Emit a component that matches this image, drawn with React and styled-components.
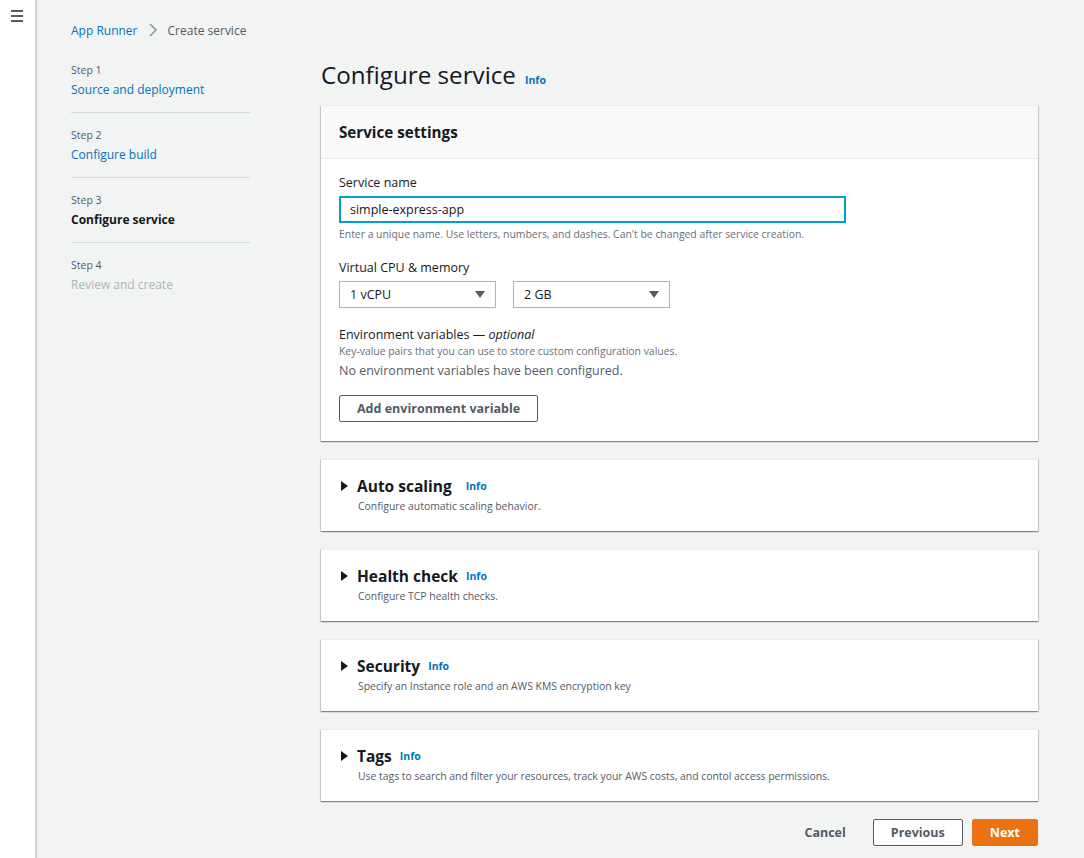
import React from 'react';
import styled, { createGlobalStyle } from 'styled-components';

const GlobalStyle = createGlobalStyle`
    html, body {
        margin: 0;
        padding: 0;
        background: #f2f3f3;
        font-family: "Open Sans", "Liberation Sans", sans-serif;
        color: #16191f;
    }
    * { box-sizing: border-box; }
`;

const Page = styled.div`
    display: flex;
    min-height: 858px;
`;

const SideRail = styled.div`
    width: 36px;
    flex-shrink: 0;
    background: #fff;
    border-right: 1px solid #d5dbdb;
    box-shadow: 1px 0 1px rgba(0, 28, 36, 0.15);
    padding-top: 10px;
    display: flex;
    justify-content: center;
`;

const Burger = styled.div`
    display: flex;
    flex-direction: column;
    gap: 3px;
    margin-left: -2px;
    span {
        display: block;
        width: 12px;
        height: 2px;
        background: #545b64;
    }
`;

const Main = styled.div`
    flex: 1;
    padding: 20px 46px 0 35px;
`;

const Crumbs = styled.nav`
    display: flex;
    align-items: center;
    gap: 8px;
    font-size: 12px;
    height: 20px;
`;

const CrumbLink = styled.a`
    color: #0073bb;
    text-decoration: none;
`;

const CrumbCurrent = styled.span`
    color: #545b64;
`;

const Columns = styled.div`
    display: flex;
    gap: 71px;
    margin-top: 22px;
`;

const Steps = styled.ol`
    list-style: none;
    margin: 0;
    padding: 0;
    width: 179px;
    flex-shrink: 0;
`;

const Step = styled.li`
    padding: 14px 0 12px;
    border-bottom: ${p => (p.$last ? 'none' : '1px solid #d5dbdb')};
    &:first-child { padding-top: 0; }
`;

const StepNum = styled.div`
    font-size: 10.5px;
    color: #545b64;
    line-height: 16px;
`;

const StepName = styled.div`
    font-size: 12px;
    line-height: 20px;
    margin-top: 2px;
    color: ${p => (p.$state === 'done' ? '#0073bb' : p.$state === 'current' ? '#16191f' : '#aab7b8')};
    font-weight: ${p => (p.$state === 'current' ? 700 : 400)};
`;

const Content = styled.div`
    flex: 1;
    margin-top: -3px;
`;

const TitleRow = styled.div`
    display: flex;
    align-items: baseline;
    gap: 9px;
    margin-bottom: 14px;
`;

const Title = styled.h1`
    margin: 0;
    font-size: 24.2px;
    font-weight: 400;
    line-height: 32px;
    color: #16191f;
`;

const Info = styled.a`
    color: #0073bb;
    font-size: 10.5px;
    font-weight: 700;
    text-decoration: none;
`;

const Card = styled.section`
    background: #fff;
    box-shadow: 0 1px 1px 0 rgba(0, 28, 36, 0.3), 1px 1px 1px 0 rgba(0, 28, 36, 0.15), -1px 1px 1px 0 rgba(0, 28, 36, 0.15);
    border-top: 1px solid #eaeded;
    margin-bottom: 18px;
`;

const CardHeader = styled.div`
    background: #fafafa;
    border-bottom: 1px solid #eaeded;
    height: 53px;
    padding: 0 18px;
    display: flex;
    align-items: center;
`;

const CardTitle = styled.h2`
    margin: 0;
    font-size: 15.2px;
    font-weight: 700;
`;

const CardBody = styled.div`
    padding: 15px 18px 19px;
`;

const Field = styled.div`
    margin-bottom: 18px;
`;

const Label = styled.div`
    font-size: 12.5px;
    line-height: 18px;
    margin-bottom: ${p => (p.$tight ? 0 : 4)}px;
    em { font-style: italic; }
`;

const Hint = styled.div`
    font-size: 10.4px;
    color: #687078;
    line-height: 14px;
`;

const TextInput = styled.input`
    display: block;
    width: 507px;
    height: 27px;
    border: 2px solid #00a1c9;
    padding: 0 9px;
    font-family: inherit;
    font-size: 12.5px;
    color: #16191f;
    outline: none;
    margin-bottom: 4px;
`;

const SelectRow = styled.div`
    display: flex;
    gap: 17px;
`;

const Select = styled.div`
    width: 157px;
    height: 27px;
    border: 1px solid #aab7b8;
    display: flex;
    align-items: center;
    justify-content: space-between;
    padding: 0 10px;
    font-size: 12.5px;
    background: #fff;
`;

const Caret = styled.span`
    width: 0;
    height: 0;
    border-left: 5px solid transparent;
    border-right: 5px solid transparent;
    border-top: 7px solid #545b64;
`;

const Empty = styled.div`
    font-size: 12.5px;
    color: #545b64;
    margin-top: 4px;
`;

const ButtonRow = styled.div`
    margin-top: 16px;
`;

const OutlineButton = styled.button`
    font-family: inherit;
    font-weight: 700;
    font-size: 12.5px;
    color: #545b64;
    background: #fff;
    border: 1px solid #545b64;
    border-radius: 2px;
    height: 27px;
    padding: 0 17px;
    cursor: pointer;
`;

const FoldHead = styled.div`
    height: 71px;
    padding: 14px 20px 0;
`;

const FoldTitleRow = styled.div`
    display: flex;
    align-items: center;
    gap: 6px;
    line-height: 24px;
`;

const Triangle = styled.span`
    width: 0;
    height: 0;
    border-top: 5px solid transparent;
    border-bottom: 5px solid transparent;
    border-left: 7px solid #16191f;
    margin-right: 3px;
`;

const FoldTitle = styled.h3`
    margin: 0;
    font-size: 15.5px;
    font-weight: 700;
    margin-right: ${p => p.$gap}px;
`;

const FoldHint = styled(Hint)`
    color: #545b64;
    padding-left: 17px;
    margin-top: 1px;
`;

const Footer = styled.div`
    display: flex;
    justify-content: flex-end;
    align-items: center;
    gap: 9px;
`;

const TextButton = styled.button`
    font-family: inherit;
    font-weight: 700;
    font-size: 12.5px;
    color: #545b64;
    background: none;
    border: none;
    padding: 0 18px;
    height: 27px;
`;

const PrimaryButton = styled.button`
    font-family: inherit;
    font-weight: 700;
    font-size: 12.5px;
    color: #fff;
    background: #ec7211;
    border: 1px solid #ec7211;
    border-radius: 2px;
    height: 27px;
    padding: 0 17px;
`;

const sections = [
    { title: 'Auto scaling', hint: 'Configure automatic scaling behavior.', gap: 8 },
    { title: 'Health check', hint: 'Configure TCP health checks.', gap: 2 },
    { title: 'Security', hint: 'Specify an Instance role and an AWS KMS encryption key', gap: 2 },
    { title: 'Tags', hint: 'Use tags to search and filter your resources, track your AWS costs, and contol access permissions.', gap: 2 },
];

const steps = [
    { num: 'Step 1', name: 'Source and deployment', state: 'done' },
    { num: 'Step 2', name: 'Configure build', state: 'done' },
    { num: 'Step 3', name: 'Configure service', state: 'current' },
    { num: 'Step 4', name: 'Review and create', state: 'todo' },
];

export default function App() {
    return (
        <>
            <GlobalStyle />
            <Page>
                <SideRail>
                    <Burger><span /><span /><span /></Burger>
                </SideRail>
                <Main>
                    <Crumbs>
                        <CrumbLink href="#">App Runner</CrumbLink>
                        <svg width="14" height="14" viewBox="0 0 14 14">
                            <path d="M4 1l6 6-6 6" fill="none" stroke="#879596" strokeWidth="1.5" />
                        </svg>
                        <CrumbCurrent>Create service</CrumbCurrent>
                    </Crumbs>
                    <Columns>
                        <Steps>
                            {steps.map((s, i) => (
                                <Step key={s.num} $last={i === steps.length - 1}>
                                    <StepNum>{s.num}</StepNum>
                                    <StepName $state={s.state}>{s.name}</StepName>
                                </Step>
                            ))}
                        </Steps>
                        <Content>
                            <TitleRow>
                                <Title>Configure service</Title>
                                <Info href="#">Info</Info>
                            </TitleRow>
                            <Card>
                                <CardHeader>
                                    <CardTitle>Service settings</CardTitle>
                                </CardHeader>
                                <CardBody>
                                    <Field>
                                        <Label>Service name</Label>
                                        <TextInput defaultValue="simple-express-app" />
                                        <Hint>Enter a unique name. Use letters, numbers, and dashes. Can't be changed after service creation.</Hint>
                                    </Field>
                                    <Field>
                                        <Label>Virtual CPU &amp; memory</Label>
                                        <SelectRow>
                                            <Select>1 vCPU<Caret /></Select>
                                            <Select>2 GB<Caret /></Select>
                                        </SelectRow>
                                    </Field>
                                    <Label $tight>Environment variables — <em>optional</em></Label>
                                    <Hint>Key-value pairs that you can use to store custom configuration values.</Hint>
                                    <Empty>No environment variables have been configured.</Empty>
                                    <ButtonRow>
                                        <OutlineButton>Add environment variable</OutlineButton>
                                    </ButtonRow>
                                </CardBody>
                            </Card>
                            {sections.map(s => (
                                <Card key={s.title}>
                                    <FoldHead>
                                        <FoldTitleRow>
                                            <Triangle />
                                            <FoldTitle $gap={s.gap}>{s.title}</FoldTitle>
                                            <Info href="#">Info</Info>
                                        </FoldTitleRow>
                                        <FoldHint>{s.hint}</FoldHint>
                                    </FoldHead>
                                </Card>
                            ))}
                            <Footer>
                                <TextButton>Cancel</TextButton>
                                <OutlineButton>Previous</OutlineButton>
                                <PrimaryButton>Next</PrimaryButton>
                            </Footer>
                        </Content>
                    </Columns>
                </Main>
            </Page>
        </>
    );
}
